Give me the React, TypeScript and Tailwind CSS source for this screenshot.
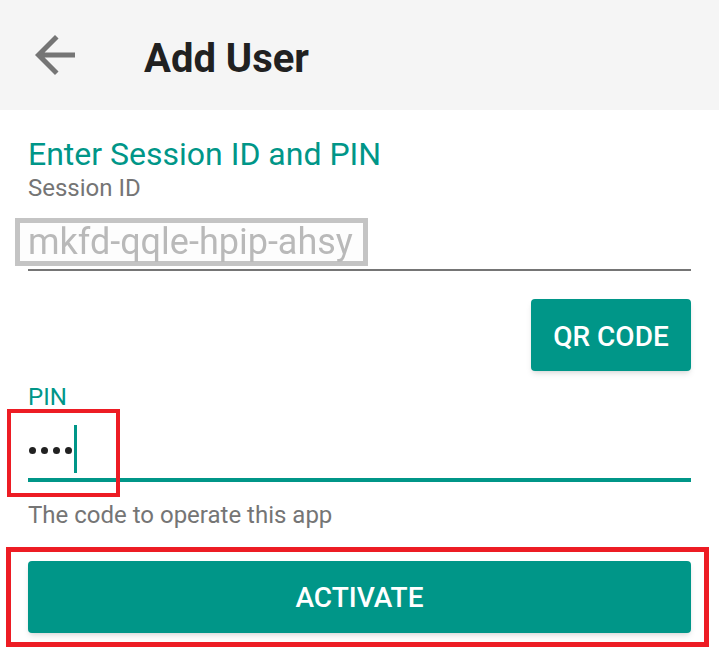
import React from 'react';

const BackArrow: React.FC = () => (
  <svg width="60" height="60" viewBox="0 0 24 24" className="shrink-0">
    <path
      d="M20 11H7.83l5.59-5.59L12 4l-8 8 8 8 1.41-1.41L7.83 13H20v-2z"
      fill="#757575"
    />
  </svg>
);

const App: React.FC = () => {
  const pinLength = 4;

  return (
    <div className="min-h-[667px] w-full bg-white font-[Roboto,sans-serif]">
      {/* app bar */}
      <header className="flex h-[110px] items-start bg-[#f5f5f5] pl-[25px] pt-[25px]">
        <BackArrow />
        <h1 className="ml-[59px] mt-[14px] text-[40px] font-bold leading-[40px] text-[#212121]">
          Add User
        </h1>
      </header>

      <main className="px-[28px] pt-[25px]">
        <h2 className="text-[32px] leading-[38px] text-[#009688]">Enter Session ID and PIN</h2>

        {/* session id field */}
        <label className="mt-[1px] block text-[24px] leading-[28px] text-[#757575]">Session ID</label>
        <div className="mt-[16px] -ml-[13px] w-[353px] border-[5px] border-[#c4c4c4] bg-[#fdfdfd] pl-[8px]">
          <span className="block pt-[1px] text-[36px] leading-[37px] text-[#b9b9b9] blur-[0.4px]">
            mkfd-qqle-hpip-ahsy
          </span>
        </div>
        <div className="mt-[3px] h-[2px] bg-[#757575]" />

        <div className="mt-[28px] flex justify-end">
          <button className="h-[72px] w-[160px] rounded-[4px] bg-[#009688] pt-[3px] text-[28px] font-medium text-white shadow-md">
            QR CODE
          </button>
        </div>

        {/* pin field */}
        <div className="relative mt-[12px]">
          <label className="block text-[24px] leading-[28px] text-[#009688]">PIN</label>
          <div className="flex h-[67px] items-start">
            <div className="mt-[36px] flex gap-[5px] pl-[1px]">
              {Array.from({ length: pinLength }).map((_, i) => (
                <span key={i} className="block h-[7px] w-[7px] rounded-full bg-[#212121]" />
              ))}
            </div>
            <span className="ml-[2px] mt-[14px] block h-[48px] w-[3px] bg-[#009688]" />
          </div>
          <div className="h-[4px] bg-[#009688]" />
          <div className="absolute left-[-21px] top-[26px] h-[88px] w-[113px] border-[4px] border-[#ed1c24]" />
        </div>

        <p className="mt-[19px] text-[24px] leading-[28px] text-[#757575]">The code to operate this app</p>

        {/* activate */}
        <div className="relative mt-[32px]">
          <button className="h-[72px] w-full rounded-[4px] bg-[#009688] pt-[2px] text-[28px] font-medium text-white shadow-md">
            ACTIVATE
          </button>
          <div className="absolute left-[-22px] top-[-14px] h-[100px] w-[703px] border-[5px] border-[#ed1c24]" />
        </div>
      </main>
    </div>
  );
};

export default App;
